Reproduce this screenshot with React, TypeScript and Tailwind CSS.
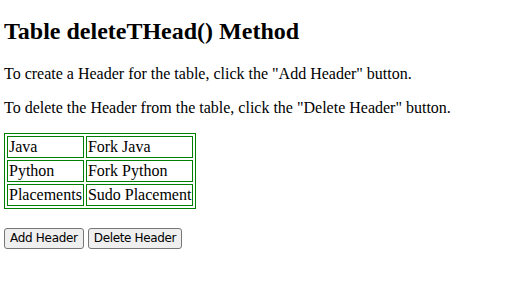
export default function App() {
    const rows = [
        ["Java", "Fork Java"],
        ["Python", "Fork Python"],
        ["Placements", "Sudo Placement"],
    ]

    return (
        <div className="mx-1 text-black font-['Liberation_Serif',serif] text-[16px] leading-[1.15]">
            <h2 className="mt-[17px] mb-[19px] pt-px text-[24px] font-bold leading-[1.15]">Table deleteTHead() Method</h2>
            <p className="my-4">To create a Header for the table, click the "Add Header" button.</p>
            <p className="my-4">To delete the Header from the table, click the "Delete Header" button.</p>
            <table className="border border-[green] border-separate border-spacing-[2px]">
                <tbody>
                    {rows.map((r) => (
                        <tr key={r[0]}>
                            {r.map((c) => (
                                <td key={c} className="border border-[green] p-[1px] leading-[18px]">{c}</td>
                            ))}
                        </tr>
                    ))}
                </tbody>
            </table>
            <div className="mt-[19px] flex gap-1">
                <button className="bg-[#efefef] border border-[#767676] rounded-[3px] px-[5px] py-[3px] text-[12px] leading-[13px] font-['DejaVu_Sans',sans-serif] tracking-[-0.3px]">Add Header</button>
                <button className="bg-[#efefef] border border-[#767676] rounded-[3px] px-[5px] py-[3px] text-[12px] leading-[13px] font-['DejaVu_Sans',sans-serif] tracking-[-0.35px]">Delete Header</button>
            </div>
        </div>
    )
}
